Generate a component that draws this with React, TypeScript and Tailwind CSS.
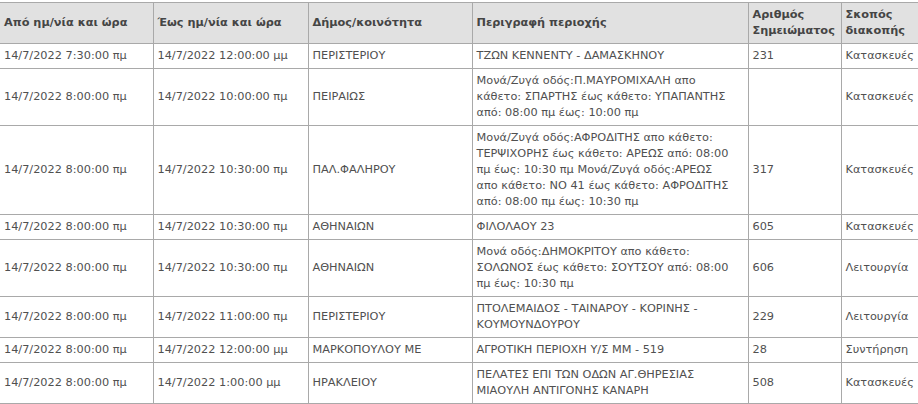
import React from 'react';

type Row = {
  from: string;
  to: string;
  area: string;
  desc: string[];
  note: string;
  reason: string;
};

const rows: Row[] = [
  {
    from: '14/7/2022 7:30:00 πμ',
    to: '14/7/2022 12:00:00 μμ',
    area: 'ΠΕΡΙΣΤΕΡΙΟΥ',
    desc: ['ΤΖΩΝ ΚΕΝΝΕΝΤΥ - ΔΑΜΑΣΚΗΝΟΥ'],
    note: '231',
    reason: 'Κατασκευές',
  },
  {
    from: '14/7/2022 8:00:00 πμ',
    to: '14/7/2022 10:00:00 πμ',
    area: 'ΠΕΙΡΑΙΩΣ',
    desc: [
      'Μονά/Ζυγά οδός:Π.ΜΑΥΡΟΜΙΧΑΛΗ απο',
      'κάθετο: ΣΠΑΡΤΗΣ έως κάθετο: ΥΠΑΠΑΝΤΗΣ',
      'από: 08:00 πμ έως: 10:00 πμ',
    ],
    note: '',
    reason: 'Κατασκευές',
  },
  {
    from: '14/7/2022 8:00:00 πμ',
    to: '14/7/2022 10:30:00 πμ',
    area: 'ΠΑΛ.ΦΑΛΗΡΟΥ',
    desc: [
      'Μονά/Ζυγά οδός:ΑΦΡΟΔΙΤΗΣ απο κάθετο:',
      'ΤΕΡΨΙΧΟΡΗΣ έως κάθετο: ΑΡΕΩΣ από: 08:00',
      'πμ έως: 10:30 πμ Μονά/Ζυγά οδός:ΑΡΕΩΣ',
      'απο κάθετο: ΝΟ 41 έως κάθετο: ΑΦΡΟΔΙΤΗΣ',
      'από: 08:00 πμ έως: 10:30 πμ',
    ],
    note: '317',
    reason: 'Κατασκευές',
  },
  {
    from: '14/7/2022 8:00:00 πμ',
    to: '14/7/2022 10:30:00 πμ',
    area: 'ΑΘΗΝΑΙΩΝ',
    desc: ['ΦΙΛΟΛΑΟΥ 23'],
    note: '605',
    reason: 'Κατασκευές',
  },
  {
    from: '14/7/2022 8:00:00 πμ',
    to: '14/7/2022 10:30:00 πμ',
    area: 'ΑΘΗΝΑΙΩΝ',
    desc: [
      'Μονά οδός:ΔΗΜΟΚΡΙΤΟΥ απο κάθετο:',
      'ΣΟΛΩΝΟΣ έως κάθετο: ΣΟΥΤΣΟΥ από: 08:00',
      'πμ έως: 10:30 πμ',
    ],
    note: '606',
    reason: 'Λειτουργία',
  },
  {
    from: '14/7/2022 8:00:00 πμ',
    to: '14/7/2022 11:00:00 πμ',
    area: 'ΠΕΡΙΣΤΕΡΙΟΥ',
    desc: ['ΠΤΟΛΕΜΑΙΔΟΣ - ΤΑΙΝΑΡΟΥ - ΚΟΡΙΝΗΣ -', 'ΚΟΥΜΟΥΝΔΟΥΡΟΥ'],
    note: '229',
    reason: 'Λειτουργία',
  },
  {
    from: '14/7/2022 8:00:00 πμ',
    to: '14/7/2022 12:00:00 μμ',
    area: 'ΜΑΡΚΟΠΟΥΛΟΥ ΜΕ',
    desc: ['ΑΓΡΟΤΙΚΗ ΠΕΡΙΟΧΗ Υ/Σ ΜΜ - 519'],
    note: '28',
    reason: 'Συντήρηση',
  },
  {
    from: '14/7/2022 8:00:00 πμ',
    to: '14/7/2022 1:00:00 μμ',
    area: 'ΗΡΑΚΛΕΙΟΥ',
    desc: ['ΠΕΛΑΤΕΣ ΕΠΙ ΤΩΝ ΟΔΩΝ ΑΓ.ΘΗΡΕΣΙΑΣ', 'ΜΙΑΟΥΛΗ ΑΝΤΙΓΟΝΗΣ ΚΑΝΑΡΗ'],
    note: '508',
    reason: 'Κατασκευές',
  },
];

const th = 'border border-[#a9a9a9] bg-[#e1e1e1] px-[4px] py-[4px] text-left align-middle font-bold text-[#454545]';
const td = 'border border-[#a9a9a9] px-[4px] py-[4px] text-left align-middle whitespace-nowrap';

export default function App() {
  return (
    <div className="w-[918px] h-[404px] overflow-hidden bg-white pt-[2px] font-['DejaVu_Sans',Verdana,sans-serif] text-[11.3px] leading-[16px] text-[#505050]">
      <table className="w-[918px] table-fixed border-collapse">
        <colgroup>
          <col className="w-[153px]" />
          <col className="w-[155px]" />
          <col className="w-[164px]" />
          <col className="w-[276px]" />
          <col className="w-[93px]" />
          <col className="w-[77px]" />
        </colgroup>
        <thead>
          <tr>
            <th className={th + ' border-l-0'}>Από ημ/νία και ώρα</th>
            <th className={th}>Έως ημ/νία και ώρα</th>
            <th className={th}>Δήμος/κοινότητα</th>
            <th className={th}>Περιγραφή περιοχής</th>
            <th className={th}>Αριθμός Σημειώματος</th>
            <th className={th}>Σκοπός διακοπής</th>
          </tr>
        </thead>
        <tbody>
          {rows.map((r, i) => (
            <tr key={i}>
              <td className={td + ' border-l-0'}>{r.from}</td>
              <td className={td}>{r.to}</td>
              <td className={td}>{r.area}</td>
              <td className={td}>
                {r.desc.map((line, j) => (
                  <React.Fragment key={j}>
                    {j > 0 && <br />}
                    {line}
                  </React.Fragment>
                ))}
              </td>
              <td className={td}>{r.note}</td>
              <td className={td}>{r.reason}</td>
            </tr>
          ))}
        </tbody>
      </table>
    </div>
  );
}
